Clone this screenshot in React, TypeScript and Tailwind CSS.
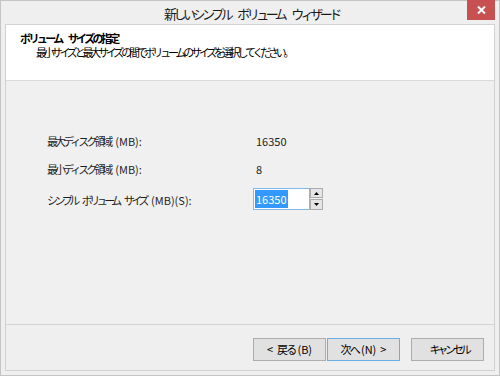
import React from "react";

function Btn({ children, primary }: { children: React.ReactNode; primary?: boolean }) {
  return (
    <div
      className={
        "w-[73px] h-[23px] flex items-center justify-center text-[11px] leading-none text-black bg-[#e1e1e1] border " +
        (primary ? "border-[#6aaee8]" : "border-[#adadad]")
      }
    >
      {children}
    </div>
  );
}

export default function App() {
  return (
    <div className="relative w-[500px] h-[376px] bg-[#efefef] border border-[#c4c4c4] flex flex-col [font-family:'Noto_Sans_CJK_JP','Noto_Sans',sans-serif]">
      <div className="h-[23px] flex items-start justify-center gap-[7px] pt-[3px] pl-[3px] text-[13px] leading-[20px] text-[#1a1a1a] tracking-[-3.5px]">
        <span>新しいシンプル</span>
        <span>ボリューム</span>
        <span>ウィザード</span>
      </div>
      <div className="absolute top-[-1px] right-[4px] w-[28px] h-[20px] bg-[#c75050] flex items-center justify-center">
        <svg width="9" height="8" viewBox="0 0 9 8">
          <path d="M1 0.5 L8 7.5 M8 0.5 L1 7.5" stroke="#ffffff" strokeWidth="2" />
        </svg>
      </div>
      <div className="mx-[4px] mb-[4px] flex-1 flex flex-col border border-[#d2d2d2]">
        <div className="h-[56px] bg-white border-b border-[#dadada] pl-[14px] pt-[6px] text-[11px] leading-[14px] text-black">
          <div className="flex gap-[6px] font-bold tracking-[-2.6px]">
            <span>ボリューム</span>
            <span>サイズの指定</span>
          </div>
          <div className="pl-[16px] tracking-[-3.2px]">最小サイズと最大サイズの間でボリュームのサイズを選択してください。</div>
        </div>
        <div className="h-[244px] bg-[#f0f0f0] border-b border-[#d5d5d5] pl-[41px] pt-[53px] text-[11px] leading-[14px] text-[#1e1e1e]">
          <div className="flex">
            <div className="w-[206px] flex">
              <span className="tracking-[-3px] mr-[5px]">最大ディスク領域</span>
              <span>(MB):</span>
            </div>
            <div className="pl-[3px]">16350</div>
          </div>
          <div className="flex mt-[14px]">
            <div className="w-[206px] flex">
              <span className="tracking-[-3px] mr-[5px]">最小ディスク領域</span>
              <span>(MB):</span>
            </div>
            <div className="pl-[3px]">8</div>
          </div>
          <div className="flex items-center mt-[12px]">
            <div className="w-[206px] pt-[1px] flex">
              <span className="tracking-[-3.5px] mr-[5px]">シンプル</span>
              <span className="tracking-[-3.5px] mr-[5px]">ボリューム</span>
              <span className="tracking-[-3.5px] mr-[5px]">サイズ</span>
              <span>(MB)(S):</span>
            </div>
            <div className="flex">
              <div className="w-[57px] h-[22px] bg-white border border-[#83b8ea] pl-[1px] pt-[1px]">
                <span className="inline-block bg-[#3399ff] text-white h-[18px] leading-[18px] px-[1px]">16350</span>
              </div>
              <div className="w-[13px] h-[22px] flex flex-col gap-[1px]">
                <div className="h-[10px] bg-[#e5e5e5] border border-[#acacac] flex items-center justify-center">
                  <svg width="5" height="3" viewBox="0 0 5 3"><path d="M2.5 0 L5 3 L0 3 Z" fill="#000" /></svg>
                </div>
                <div className="h-[11px] bg-[#e5e5e5] border border-[#acacac] flex items-center justify-center">
                  <svg width="5" height="3" viewBox="0 0 5 3"><path d="M0 0 L5 0 L2.5 3 Z" fill="#000" /></svg>
                </div>
              </div>
            </div>
          </div>
        </div>
        <div className="flex-1 flex justify-end items-start pt-[13px] pr-[10px]">
          <div className="flex gap-[1px]">
            <Btn>
              <span className="mr-[4px]">&lt;</span>
              <span className="tracking-[-1.8px] mr-[2px]">戻る</span>
              <span>(B)</span>
            </Btn>
            <Btn primary>
              <span className="tracking-[-1.8px] mr-[2px]">次へ</span>
              <span className="mr-[4px]">(N)</span>
              <span>&gt;</span>
            </Btn>
          </div>
          <div className="ml-[11px]">
            <Btn>
              <span className="tracking-[-3.2px] mr-[-3px]">キャンセル</span>
            </Btn>
          </div>
        </div>
      </div>
    </div>
  );
}
